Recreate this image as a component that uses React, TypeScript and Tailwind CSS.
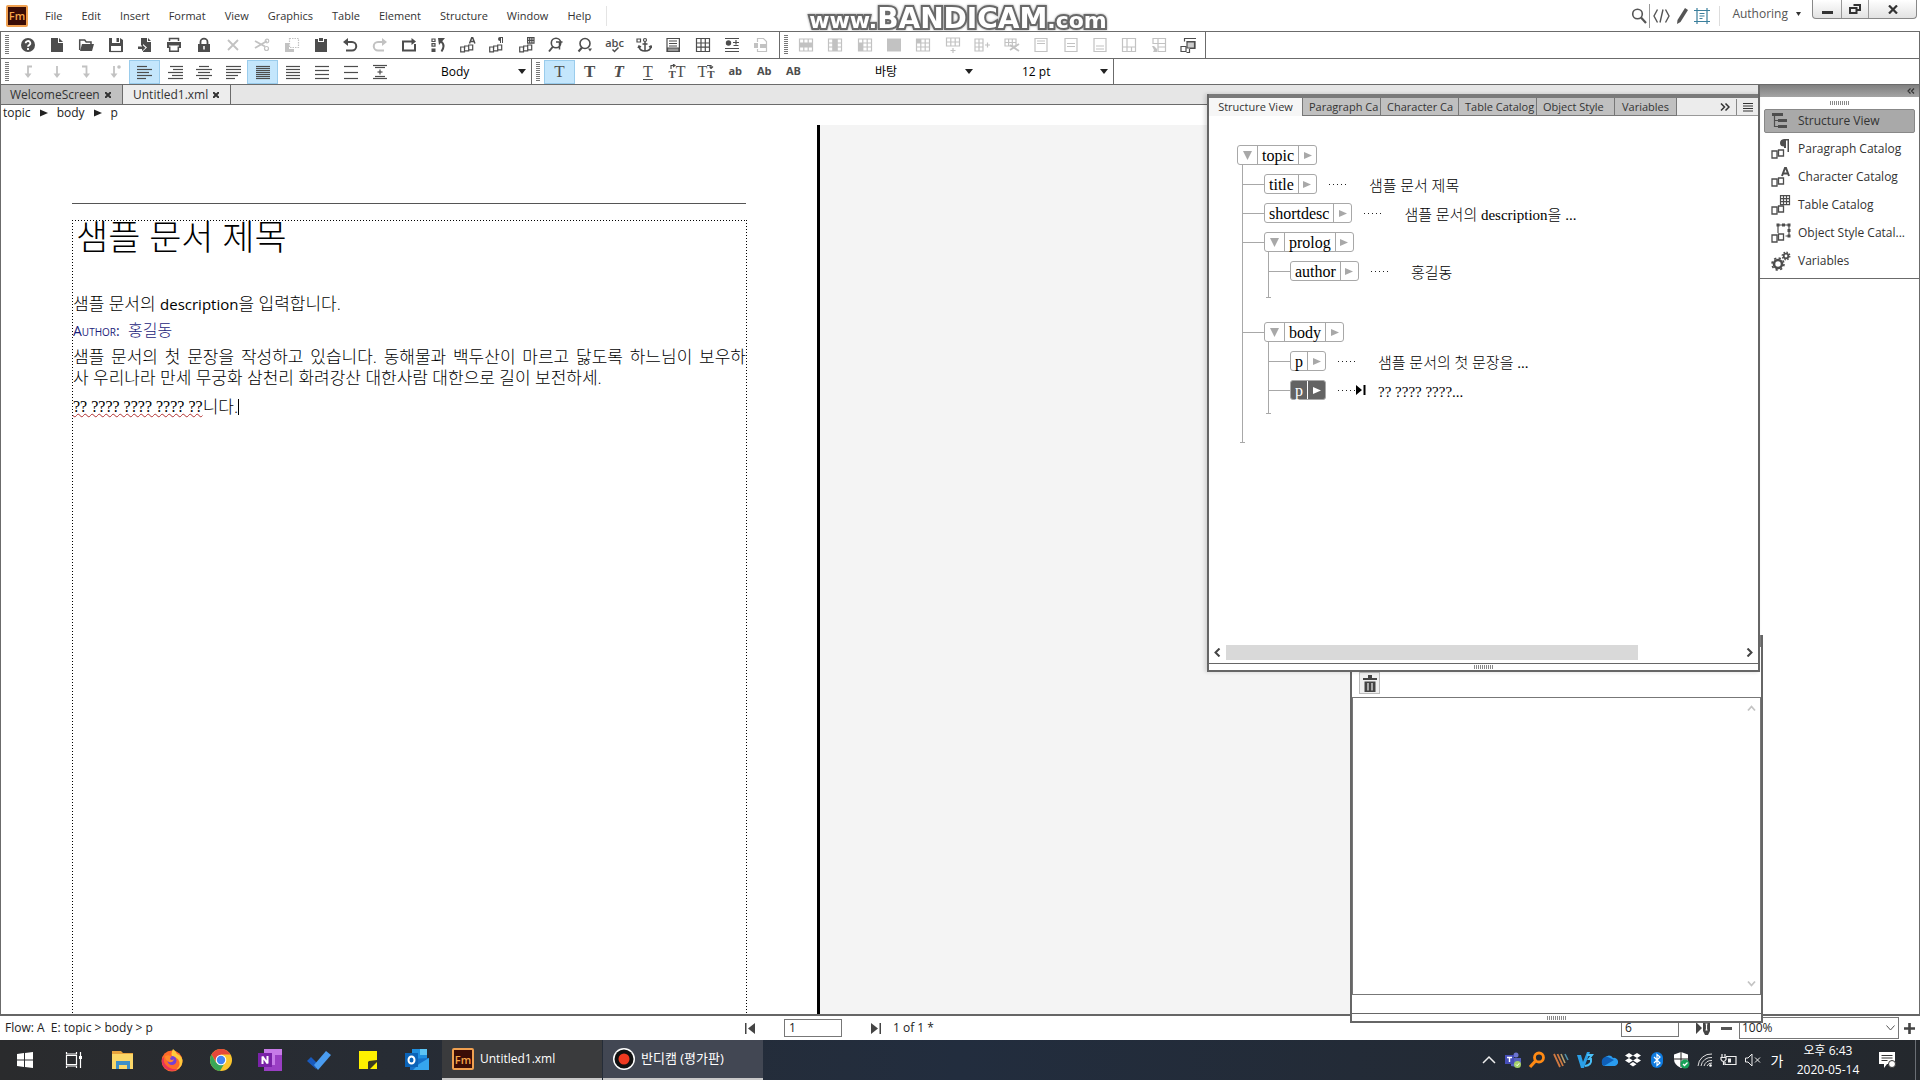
import React from "react";

type Kids = { children?: React.ReactNode };

function Ic({ children, w = 16, h = 16, vb = "0 0 16 16" }: Kids & { w?: number; h?: number; vb?: string }) {
  return (
    <svg width={w} height={h} viewBox={vb} fill="none" stroke="currentColor" strokeWidth="1.2" aria-hidden="true">
      {children}
    </svg>
  );
}

const solid = { fill: "currentColor", stroke: "none" };

function Boxes() {
  return <path d="M.7 10h3.800v4.800H.7zM4.700 11.500V9h4v4.800H4.700M8.700 10.500V8h4v4.800H8.700" />;
}

function Grip() {
  return <span className="h-[20px] w-[4px] shrink-0 bg-[repeating-linear-gradient(to_bottom,#777_0_1px,transparent_1px_2px)]" />;
}

function HGrip() {
  return <span className="h-[4px] w-[20px] bg-[repeating-linear-gradient(to_right,#888_0_1px,transparent_1px_2px)]" />;
}

type Tool = { n: string; off?: boolean; on?: boolean; i: React.ReactNode };

const fileTools: Tool[] = [
  { n: "Help", i: <Ic><circle cx="8" cy="8" r="7" {...solid} /><path stroke="#fff" strokeWidth="1.8" d="M5.700 6.300a2.300 2.200 0 1 1 3.500 1.800q-1.200.7-1.200 1.700M8 11v2" /></Ic> },
  { n: "New", i: <Ic><path {...solid} d="M2 1h7v5h5v9H2zM10 1l4 4h-4z" /></Ic> },
  { n: "Open", i: <Ic><path {...solid} d="M4 7h12l-2 7H2z" /><path strokeWidth="1.500" d="M1.700 13V3h5l1.500 2H13v2" /></Ic> },
  { n: "Save", i: <Ic><path {...solid} d="M1 1h3v5h8V1l3 2v12h-2V9H3v6H1zM8.500 1H11v4H8.500z" /><path d="M2 14.500h12" /></Ic> },
  { n: "Import", i: <Ic><path {...solid} d="M4 1h6v4h4v10H6v-1l4-3.500L6 7v1.500H4zM11 1l3 3h-3z" /><path {...solid} d="M1 9.500h4V7.500l3.500 3.200L5 14v-2H1z" /></Ic> },
  { n: "Print", i: <Ic><path d="M3.500 4V1.600h9V4" strokeWidth="1.500" /><path {...solid} d="M1 5h14v6h-2V8.500H3V11H1z" /><path d="M3.700 9.500v4.800h8.600V9.500" strokeWidth="1.500" /></Ic> },
  { n: "Lock", i: <Ic><path {...solid} d="M2 7h12v8H2z" /><path strokeWidth="1.800" d="M4.500 8V5a3.500 3.300 0 0 1 7 0v3" /><path stroke="#fff" strokeWidth="1.500" d="M8 9v3.500" /></Ic> },
  { n: "Delete", off: true, i: <Ic><path strokeWidth="1.800" d="M3 3l10 10M13 3L3 13" /></Ic> },
  { n: "Cut", off: true, i: <Ic><path strokeWidth="1.800" d="M1 4l10 5.500M1 11l12-7" /><circle cx="13" cy="4" r="1.800" /><circle cx="12.500" cy="11.500" r="2" /></Ic> },
  { n: "Copy", off: true, i: <Ic><path {...solid} d="M1 6h4v6h5v3H1z" /><path strokeDasharray="1.500 1" d="M5.500 1.500h9v9h-9z" /></Ic> },
  { n: "Paste", i: <Ic><path {...solid} d="M2 2h3v3h6V2h3v13H2zM6 1h4v3H6z" /></Ic> },
  { n: "Undo", i: <Ic><path strokeWidth="2" d="M3 5h7a3.800 3.800 0 0 1 0 8.500H4" /><path {...solid} d="M6 1v8L1 5z" /></Ic> },
  { n: "Redo", off: true, i: <Ic><path strokeWidth="2" d="M13 5H6a3.800 3.800 0 0 0 0 8.500h6" /><path {...solid} d="M10 1v8l5-4z" /></Ic> },
  { n: "Repeat", i: <Ic><path strokeWidth="2" d="M12 4.500H2v9h12V7" /><path {...solid} d="M10.500 1v7l4.500-3.500z" /></Ic> },
  { n: "History", i: <Ic><path d="M2 2h3v2.500H2zM2 6.700h3v2.500H2z" /><path {...solid} d="M1.500 11.500h4V15h-4zM8 1h7L9 8z" /><path strokeWidth="2" d="M10.500 4q5.500 4 1 10.500" /></Ic> },
  { n: "Character catalog", i: <Ic><Boxes /><path strokeWidth="1.500" d="M9.500 6.500l2.300-6h.8l2.300 6M10.500 4.500H14" /></Ic> },
  { n: "Paragraph catalog", i: <Ic><Boxes /><path {...solid} d="M14 0v6h-1V1h-1v5h-1V4Q9 4 9 2t2-2z" /></Ic> },
  { n: "Table catalog", i: <Ic><Boxes /><path d="M8.600.6H15v5.500H8.600zM8.600 3.300H15M10.700.6v5.500M12.900.6v5.500" /></Ic> },
  { n: "Find and replace", i: <Ic><circle cx="8" cy="6" r="4.700" strokeWidth="1.600" /><path strokeWidth="2" d="M5 9.500L1 14.500" /><path d="M8 5h6.500M11.500 5v7.500" strokeWidth="1.500" /></Ic> },
  { n: "Find", i: <Ic><circle cx="8" cy="6.500" r="5" strokeWidth="1.600" /><path strokeWidth="2" d="M5 10.500L1.500 14.500" /><path {...solid} d="M11 11.500h4l-2 3z" /></Ic> },
  { n: "Spelling", i: <span className="flex flex-col items-center text-[11px] leading-[9px] font-semibold">abc<Ic w={8} h={6} vb="0 0 8 6"><path strokeWidth="1.500" d="M1.500 2.500l2 2 4-4" /></Ic></span> },
  { n: "Anchored frame", i: <Ic><path d="M1 2h3.500v3H1z" /><circle cx="9" cy="3" r="1.500" /><path strokeWidth="1.500" d="M9 4.500V14M6.500 7h5M3 10q1 4 6 4t6-4M2 11l1-2 2 1M16 11l-1-2-2 1" /></Ic> },
  { n: "Footnote", i: <Ic><path d="M2 1.500h12.400v13H2zM4 4h8M4 6.500h8M4 9h8" /><path d="M2.500 11h11.400v3.500H2.500z" fill="#999" /></Ic> },
  { n: "Insert table", i: <Ic><path d="M1.500 1.500h13v13h-13zM1.500 6h13M1.500 10.200h13M6 1.500v13M10.300 1.500v13" /></Ic> },
  { n: "Conditional text", i: <Ic><circle cx="4.500" cy="6" r="2.700" {...solid} /><path d="M1 1.500h14M1 11.500h14M1 14.500h14M9 5.500h6M12 3v4.500M9.500 8.500h5" /></Ic> },
  { n: "Link", off: true, i: <Ic><path d="M4.500 5V1.500h6l3 3v10h-9V12" /><path {...solid} d="M1 6h4v5H1zM7 7h7v4H7z" /></Ic> },
];

const G = "M1.500 2h13v12h-13zM1.500 6h13M1.500 10h13M5.800 2v12M10.200 2v12";
const tableTools: Tool[] = [
  { n: "Select row", off: true, i: <Ic><path d={G} /><path {...solid} d="M1 6h14v4H1z" /></Ic> },
  { n: "Select column", off: true, i: <Ic><path d={G} /><path {...solid} d="M6 2h4v12H6z" /></Ic> },
  { n: "Select body cells", off: true, i: <Ic><path d={G} /><path {...solid} d="M1 6h5v8H1z" /></Ic> },
  { n: "Select table", off: true, i: <Ic><path {...solid} d="M1 1.500h14v13H1z" /></Ic> },
  { n: "Heading", off: true, i: <Ic><path d={G} /><path {...solid} d="M1 2h5v4H1z" /></Ic> },
  { n: "Add row", off: true, i: <Ic><path d="M1.500 1h13v8h-13zM1.500 5h13M5.800 1v8M10.200 1v8M8 11v5M5.500 13.500h5" /></Ic> },
  { n: "Add column", off: true, i: <Ic><path d="M1 2h8v12H1zM1 6h8M1 10h8M5 2v12M11 8h5M13.500 5.500v5" /></Ic> },
  { n: "Delete cells", off: true, i: <Ic><path d="M1 2h11v7H1zM1 5.500h11M4.600 2v7M8.300 2v7" /><path strokeWidth="1.800" d="M6 8l9 6M6 13l9-6" /></Ic> },
  { n: "Align cell top", off: true, i: <Ic><path d="M2 1.500h12v13H2zM4 4h8M4 6.500h8" /></Ic> },
  { n: "Align cell middle", off: true, i: <Ic><path d="M2 1.500h12v13H2zM4 6.500h8M4 9.500h8" /></Ic> },
  { n: "Align cell bottom", off: true, i: <Ic><path d="M2 1.500h12v13H2zM4 9h8M4 12h8" /></Ic> },
  { n: "Straddle", off: true, i: <Ic><path d="M1.500 1.500h13v13h-13zM1.500 10h13M6 1.500v13M10.500 10v4.500" /></Ic> },
  { n: "Unstraddle", off: true, i: <Ic><path d="M2 1.500h12.500v5H2zM7 1.500v13h7.500v-13M7 10h7.500" /><path {...solid} d="M1 9h2l3 3v3H2l1-2z" /></Ic> },
  { n: "Object style", i: <Ic><path d="M4 1.500h12M4.500 1.500v3M6.500 4.500H15v7H10" /><path d="M7 5h7.500v6H7z" fill="#ccc" /><path d="M1 9.500h5v5H1zM9.500 11.500v4h-3" fill="#fff" /></Ic> },
];

const lines = (a: [number, number, number][]) => a.map(([x, y, w], i) => <path key={i} d={`M${x} ${y}h${w}`} />);

const paraTools: Tool[] = [
  { n: "Left tab", off: true, i: <Ic><path strokeWidth="1.800" d="M12 2.500H8V11" /><path {...solid} d="M4.500 9.500h7L8 14z" /></Ic> },
  { n: "Center tab", off: true, i: <Ic><path strokeWidth="1.800" d="M8 2v9" /><path {...solid} d="M4.500 9.500h7L8 14z" /></Ic> },
  { n: "Right tab", off: true, i: <Ic><path strokeWidth="1.800" d="M4 2.500h4.500V11" /><path {...solid} d="M5 9.500h7L8.500 14z" /></Ic> },
  { n: "Decimal tab", off: true, i: <Ic><path strokeWidth="1.800" d="M7 2v9" /><path {...solid} d="M3.500 9.500h7L7 14z" /><circle cx="12" cy="3" r="1.800" {...solid} /></Ic> },
  { n: "Align left", on: true, i: <Ic>{lines([[0, 2.500, 10], [0, 5.500, 15], [0, 8.500, 12], [0, 11.500, 15], [0, 14.500, 9]])}</Ic> },
  { n: "Align right", i: <Ic>{lines([[3, 2.500, 13], [6, 5.500, 10], [1, 8.500, 15], [5, 11.500, 11], [1, 14.500, 15]])}</Ic> },
  { n: "Align center", i: <Ic>{lines([[3, 2.500, 10], [0, 5.500, 16], [2, 8.500, 12], [0, 11.500, 16], [3, 14.500, 10]])}</Ic> },
  { n: "Justify", i: <Ic>{lines([[1, 2.500, 15], [1, 5.500, 15], [1, 8.500, 15], [1, 11.500, 12], [1, 14.500, 9]])}</Ic> },
  { n: "Single spacing", on: true, i: <Ic>{lines([[1, 2.500, 14], [1, 4.500, 14], [1, 6.500, 14], [1, 8.500, 14], [1, 10.500, 14], [1, 12.500, 14], [1, 14.500, 14]])}</Ic> },
  { n: "One and a half spacing", i: <Ic>{lines([[1, 2.500, 14], [1, 5.500, 14], [1, 8.500, 14], [1, 11.500, 14], [1, 14.500, 14]])}</Ic> },
  { n: "Double spacing", i: <Ic>{lines([[1, 2.500, 14], [1, 6.500, 14], [1, 10.500, 14], [1, 14.500, 14]])}</Ic> },
  { n: "Custom spacing", i: <Ic>{lines([[1, 2.500, 14], [1, 8.500, 14], [1, 14.500, 14]])}</Ic> },
  { n: "Space between paragraphs", i: <Ic>{lines([[1, 1.500, 14], [3, 3.500, 10], [5.500, 8, 5], [3, 12.500, 10], [1, 14.500, 14]])}<path d="M8 5.500v5" /></Ic> },
];

const S = "font-['Liberation_Serif',serif]";

function SmallT({ flip }: { flip?: boolean }) {
  return (
    <span className="flex flex-col items-center text-[11px] leading-[10px] font-bold">
      <Ic w={7} h={5} vb="0 0 7 5">
        {flip ? <path d="M0 1.500h4v3M2.500 2.500L4 4.500l2-2" /> : <path d="M2 5V1.500h4M4 0l2 1.500L4 3" />}
      </Ic>
      T
    </span>
  );
}

const textTools: Tool[] = [
  { n: "Plain", on: true, i: <span className={`${S} text-[17px]`}>T</span> },
  { n: "Bold", i: <span className={`${S} text-[17px] font-bold`}>T</span> },
  { n: "Italic", i: <span className={`${S} text-[17px] font-bold italic`}>T</span> },
  { n: "Underline", i: <span className={`${S} text-[16px] underline underline-offset-2`}>T</span> },
  { n: "Superscript", i: <span className={`${S} flex items-center text-[16px] leading-5`}><SmallT />T</span> },
  { n: "Subscript", i: <span className={`${S} flex items-center text-[16px] leading-5`}>T<SmallT flip /></span> },
  { n: "Lowercase", i: <span className="text-[11px] font-bold">ab</span> },
  { n: "Initial caps", i: <span className="text-[11px] font-bold">Ab</span> },
  { n: "Uppercase", i: <span className="text-[11px] font-bold">AB</span> },
];

function Tools({ items, className }: { items: Tool[]; className: string }) {
  return (
    <div className={`flex shrink-0 items-center ${className}`}>
      {items.map((t) => (
        <button
          key={t.n}
          aria-label={t.n}
          className={`flex h-6 flex-1 items-center justify-center ${t.on ? "border border-[#9accec] bg-[#c4e6fc]" : ""} ${t.off ? "text-[#c2c2c2]" : "text-[#4d4d4d]"}`}
        >
          {t.i}
        </button>
      ))}
    </div>
  );
}

function Pick({ label, value, className }: { label: string; value: string; className: string }) {
  return (
    <label className={`relative flex shrink-0 items-center self-stretch ${className}`}>
      <select aria-label={label} className="w-full appearance-none bg-transparent text-xs text-black outline-none">
        <option>{value}</option>
      </select>
      <svg className="pointer-events-none absolute right-[5px]" width="8" height="5" viewBox="0 0 8 5" aria-hidden="true">
        <path d="M0 0h8L4 5z" fill="#222" />
      </svg>
    </label>
  );
}

function FmLogo() {
  return (
    <span className="flex size-[22px] shrink-0 items-center justify-center rounded-[2px] border-2 border-[#f0a050] bg-[#3a0c06] text-[11px] leading-none font-semibold text-[#f7a64a]">
      Fm
    </span>
  );
}

function MenuBar() {
  const menus = ["File", "Edit", "Insert", "Format", "View", "Graphics", "Table", "Element", "Structure", "Window", "Help"];
  return (
    <header className="relative flex h-[31px] shrink-0 items-center pl-1.5 text-[11px] text-[#333]">
      <FmLogo />
      <nav className="ml-2 flex items-center gap-px">
        {menus.map((m) => (
          <button key={m} className="px-[9px] leading-5">{m}</button>
        ))}
      </nav>
      <span className="ml-1.5 h-5 w-px bg-[#e4e4e4]" />
      <div className="pointer-events-none absolute inset-x-0 top-[5px] flex items-baseline justify-center pr-1 font-['DejaVu_Sans',sans-serif] leading-7 font-bold text-white drop-shadow-[0_0_1px_#999] [-webkit-text-stroke:4px_#686868] [paint-order:stroke_fill]">
        <span className="text-[22px]">www.</span>
        <span className="text-[28px]">BANDICAM</span>
        <span className="text-[22px]">.com</span>
      </div>
      <div className="relative ml-auto flex items-center self-stretch text-[#555]">
        <button aria-label="Search" className="flex h-6 w-5 items-center justify-center">
          <Ic><circle cx="6.500" cy="6" r="4.800" strokeWidth="1.600" /><path strokeWidth="2.200" d="M10 9.500l5 5.500" /></Ic>
        </button>
        <span className="h-6 w-px bg-[#999]" />
        <button aria-label="XML view" className="flex h-6 w-[22px] items-center justify-center">
          <Ic w={17} vb="0 0 17 16"><path strokeWidth="1.400" d="M4.500 1.500L1 8l3.500 6.500M12.500 1.500L16 8l-3.500 6.500M10 1.500L7 14.500" /></Ic>
        </button>
        <button aria-label="Author view" className="flex h-6 w-[20px] items-center justify-center">
          <Ic w={12} vb="0 0 12 16"><path {...solid} d="M9 0l3 2-7.500 12L1 16l.5-4z" /></Ic>
        </button>
        <button aria-label="WYSIWYG view" className="flex h-6 w-[20px] items-center justify-center text-[#3b7f9c]">
          <Ic><path d="M3 0v16M13 0v16M0 2.500h16M0 13.500h16M5.500 5.500h5M5.500 8h5M5.500 10.500h3" /></Ic>
        </button>
        <span className="mx-[7px] h-5 w-px bg-[#ddd]" />
        <button className="flex items-center gap-2 px-[5px] pb-1 text-[12px] leading-[26px]">
          Authoring
          <svg width="5" height="4" viewBox="0 0 5 4" aria-hidden="true"><path d="M0 0h5L2.500 4z" fill="#333" /></svg>
        </button>
        <div className="mr-[3px] ml-1.5 flex h-[19px] self-start rounded-b-sm border border-t-0 border-[#888] bg-gradient-to-b from-white to-[#e2e2e2] text-[#333]">
          <button aria-label="Minimize" className="flex w-7 items-end justify-center pb-1"><span className="h-[3px] w-[11px] bg-[#333]" /></button>
          <button aria-label="Restore" className="flex w-7 items-center justify-center border-x border-[#999]">
            <Ic w={12} h={10} vb="0 0 12 10"><path strokeWidth="2" d="M4.500 1h6.500v5H8.500M1 4h6.500v5H1z" /></Ic>
          </button>
          <button aria-label="Close" className="flex w-[47px] items-center justify-center">
            <Ic w={10} h={9} vb="0 0 10 9"><path strokeWidth="2.200" d="M1 .5l8 8M9 .5l-8 8" /></Ic>
          </button>
        </div>
      </div>
    </header>
  );
}

function CloseX() {
  return <Ic w={6} h={6} vb="0 0 6 6"><path strokeWidth="2" d="M0 0l6 6M6 0L0 6" /></Ic>;
}

function DocTabs() {
  return (
    <div className="flex h-[21px] shrink-0 border-y border-[#6b6b6b] bg-[#e6e6e6] text-[12px] leading-[18px] text-[#333]">
      <div className="flex w-[122px] items-center justify-between border-r border-[#6b6b6b] bg-[#c0c0c0] pr-[11px] pl-[9px]">
        WelcomeScreen
        <button aria-label="Close WelcomeScreen"><CloseX /></button>
      </div>
      <div className="flex w-[108px] items-center justify-between border-r border-[#6b6b6b] bg-[#ededed] pr-[11px] pl-2.5">
        Untitled1.xml
        <button aria-label="Close Untitled1.xml"><CloseX /></button>
      </div>
    </div>
  );
}

function Tri() {
  return <svg width="8" height="8" viewBox="0 0 8 8" aria-hidden="true"><path d="M0 .5v7L8 4z" fill="#222" /></svg>;
}

const DOT_FRAME =
  "bg-no-repeat bg-[image:repeating-linear-gradient(to_right,#000_0_1px,transparent_1px_3px),repeating-linear-gradient(to_bottom,#000_0_1px,transparent_1px_3px),repeating-linear-gradient(to_bottom,#000_0_1px,transparent_1px_3px)] [background-size:100%_1px,1px_100%,1px_100%] [background-position:left_top,left_top,right_top]";

function Document() {
  return (
    <div className="flex min-h-0 flex-1 bg-[#f4f4f4]">
      <article className="flex w-[819px] flex-col border-r-[3px] border-black bg-white pt-[78px] pr-[70px] pl-[71px] text-black">
        <hr className="mr-px border-t border-[#555]" />
        <div className={`mt-4 flex-1 p-px text-[17px] leading-[21px] font-light ${DOT_FRAME}`}>
          <h1 className="mt-0.5 pl-[3px] font-['Liberation_Serif','Noto_Sans_CJK_KR',serif] text-[35px] leading-8 font-light">샘플 문서 제목</h1>
          <p className="mt-[38px]">샘플 문서의 <span className="text-[15px] font-normal">description</span>을 입력합니다.</p>
          <p className="mt-[5px] text-[16px] text-[#1c1c7a]"><span className="text-[14px] font-normal [font-variant:small-caps]">Author:</span>&nbsp; 홍길동</p>
          <p className="mt-[5px] [text-align-last:justify]">샘플 문서의 첫 문장을 작성하고 있습니다. 동해물과 백두산이 마르고 닳도록 하느님이 보우하</p>
          <p>사 우리나라 만세 무궁화 삼천리 화려강산 대한사람 대한으로 길이 보전하세.</p>
          <p className="mt-2 flex items-center">
            <span className="font-['Liberation_Serif',serif] text-[16px] font-normal underline decoration-[#b03030] decoration-wavy decoration-1 underline-offset-1">?? ???? ???? ???? ??</span>
            니다.<span className="h-4 w-px bg-black" />
          </p>
        </div>
      </article>
    </div>
  );
}

function Dock() {
  const cat = (d: React.ReactNode) => <Ic w={20} h={20} vb="0 0 20 20"><path strokeWidth="1.300" d="M1 12h5v7H1zM7.500 13.500V11h5v6h-5v-3.500" />{d}</Ic>;
  const items: [string, React.ReactNode][] = [
    ["Structure View", <Ic w={18} h={16} vb="0 0 18 16"><path {...solid} d="M1 0h11v3H1zM7 6h9v3H7zM7 12h9v3H7z" /><path d="M3.500 2v11.500H8M3.500 7.500H8" /></Ic>],
    ["Paragraph Catalog", cat(<path {...solid} d="M18 0v13h-1.500V1.500H15V9h-2V7.500Q9 7.500 9 4t4-4z" />)],
    ["Character Catalog", cat(<path strokeWidth="2" d="M11 9l3-8h1l3 8M12 6.500h5" />)],
    ["Table Catalog", cat(<path d="M9.500.7h9v9h-9zM9.500 3.700h9M9.500 6.700h9M12.500.7v9M15.500.7v9" />)],
    ["Object Style Catal...", cat(<><path d="M7 10V2h11v11h-3.500" /><path {...solid} d="M5.500.5h3v3h-3zM11 .5h3v3h-3zM16.500.5h3v3h-3zM16.500 6h3v3h-3zM16.500 11.500h3v3h-3z" /></>)],
    ["Variables", <Ic w={20} h={20} vb="0 0 20 20"><circle cx="7" cy="13" r="4" strokeWidth="2.600" /><circle cx="7" cy="13" r="6" strokeWidth="1.600" strokeDasharray="2.300 2.400" /><circle cx="15" cy="5" r="2.300" strokeWidth="1.800" /><circle cx="15" cy="5" r="3.800" strokeWidth="1.300" strokeDasharray="1.500 1.480" /></Ic>],
  ];
  return (
    <aside className="flex w-[161px] shrink-0 flex-col border-t border-l-2 border-[#6b6b6b] bg-white">
      <div className="flex h-3 items-center justify-end bg-gradient-to-b from-[#808080] to-[#a4a4a4] pr-1 text-[#333]">
        <Ic w={8} h={6} vb="0 0 8 6"><path d="M3.500.5L1 3l2.500 2.500M7 .5L4.500 3 7 5.500" /></Ic>
      </div>
      <div className="flex h-3 items-center justify-center"><HGrip /></div>
      <div className="flex flex-col border-b border-[#6b6b6b] px-1 pb-px">
        {items.map(([n, ic], i) => (
          <button
            key={n}
            className={`mb-1 flex h-6 items-center rounded-[2px] border pl-1.5 text-[12px] text-[#333] ${i === 0 ? "border-[#888] bg-[#a9a9a9]" : "border-transparent"}`}
          >
            <span className="flex w-[27px] text-[#4d4d4d]">{ic}</span>
            {n}
          </button>
        ))}
      </div>
    </aside>
  );
}

function Tag({ name, open, sel }: { name: string; open?: boolean; sel?: boolean }) {
  const line = sel ? "border-white" : "border-[#a8a8a8]";
  return (
    <button className={`flex h-5 items-stretch rounded-[3px] border border-[#a8a8a8] ${sel ? "bg-[#636363] text-white" : "bg-white text-black"}`}>
      {open && (
        <span className={`flex w-5 items-center justify-center border-r ${line}`}>
          <svg width="9" height="9" viewBox="0 0 9 9" aria-hidden="true"><path d="M0 0h9L4.500 9z" fill="#a8a8a8" /></svg>
        </span>
      )}
      <span className={`border-r px-1 text-[16px] leading-5 ${line}`}>{name}</span>
      <span className="flex w-[17px] items-center justify-center">
        <svg width="8" height="7" viewBox="0 0 8 7" aria-hidden="true"><path d="M0 0v7l8-3.500z" fill={sel ? "#fff" : "#a8a8a8"} /></svg>
      </span>
    </button>
  );
}

function Row({ text, caret, ...tag }: { name: string; open?: boolean; sel?: boolean; text?: string; caret?: boolean }) {
  return (
    <div className="mb-[9px] flex h-5 items-center">
      <span className="h-px w-[21px] bg-[#a8a8a8]" />
      <Tag {...tag} />
      {text && (
        <>
          <span className="ml-3 h-px w-[18px] bg-[repeating-linear-gradient(to_right,#222_0_1px,transparent_1px_4px)]" />
          <span className="flex w-[22px]">
            {caret && <svg width="10" height="10" viewBox="0 0 10 10" aria-hidden="true"><path d="M0 0v10l6-5zM7.500 0H9.500v10H7.500z" fill="#000" /></svg>}
          </span>
          <span className="pt-1 text-[15px] leading-5 font-light text-black">{text}</span>
        </>
      )}
    </div>
  );
}

function Branch({ children, className }: Kids & { className: string }) {
  return (
    <div className={className}>
      <div className="border-l border-[#a8a8a8]">{children}</div>
      <div className="-ml-0.5 h-px w-[5px] bg-[#a8a8a8]" />
    </div>
  );
}

function StructurePanel() {
  const tabs = [
    ["Paragraph Catalog", "Paragraph Ca"],
    ["Character Catalog", "Character Ca"],
    ["Table Catalog", "Table Catalog"],
    ["Object Style", "Object Style"],
  ];
  return (
    <section className="absolute top-[94px] right-[160px] flex h-[578px] w-[553px] flex-col border-x-2 border-b-2 border-[#666] bg-white shadow-[-2px_0_4px_rgba(0,0,0,0.15)]">
      <div className="h-1 shrink-0 bg-[#7a7a7a]" />
      <div role="tablist" className="flex h-[18px] shrink-0 bg-[#ececec] text-[11px] leading-[18px] text-[#333]">
        <button role="tab" aria-selected="true" className="w-[93px] bg-[#f6f6f6] text-center whitespace-nowrap">Structure View</button>
        {tabs.map(([full, shown]) => (
          <button key={full} role="tab" aria-label={full} className="w-[78px] border-b border-l border-[#777] bg-[#c0c0c0] pl-1.5 text-left whitespace-nowrap">{shown}</button>
        ))}
        <button role="tab" className="w-[63px] border-x border-b border-[#777] bg-[#c0c0c0] text-center">Variables</button>
        <div className="flex flex-1 items-center justify-end gap-1.5 border-b border-[#999] pr-[5px] text-[#333]">
          <Ic w={10} h={8} vb="0 0 10 8"><path strokeWidth="1.500" d="M1 0.500L4.500 4 1 7.500M5.500.5L9 4 5.500 7.500" /></Ic>
          <span className="h-4 w-px self-center bg-[#888]" />
          <button aria-label="Panel menu"><Ic w={10} h={10} vb="0 0 10 10"><path d="M0 1.500h10M0 4h10M0 6.500h10M0 9h10" /></Ic></button>
        </div>
      </div>
      <div className="flex-1 pt-[29px] pl-7 font-['Liberation_Serif','Noto_Sans_CJK_KR',serif]">
        <div className="flex"><Tag name="topic" open /></div>
        <Branch className="ml-[5px]">
          <div className="pt-[9px] pb-7">
            <Row name="title" text="샘플 문서 제목" />
            <Row name="shortdesc" text="샘플 문서의 description을 ..." />
            <Row name="prolog" open />
            <Branch className="-mt-[9px] mb-6 ml-[25px]">
              <div className="pt-[9px] pb-[7px]"><Row name="author" text="홍길동" /></div>
            </Branch>
            <Row name="body" open />
            <Branch className="-mt-[9px] ml-[25px]">
              <div className="pt-[9px] pb-1">
                <Row name="p" text="샘플 문서의 첫 문장을 ..." />
                <Row name="p" sel caret text="?? ???? ????..." />
              </div>
            </Branch>
          </div>
        </Branch>
      </div>
      <div className="flex h-[22px] shrink-0 items-center px-[5px] text-[#444]">
        <button aria-label="Scroll left"><Ic w={8} h={9} vb="0 0 8 9"><path strokeWidth="2" d="M5.500.5l-4 4 4 4" /></Ic></button>
        <div className="mx-1 h-[15px] flex-1"><div className="h-full w-[80%] bg-[#d9d9d9]" /></div>
        <button aria-label="Scroll right"><Ic w={8} h={9} vb="0 0 8 9"><path strokeWidth="2" d="M2.500.5l4 4-4 4" /></Ic></button>
      </div>
      <div className="flex h-[7px] shrink-0 items-center justify-center border-t border-[#666]"><HGrip /></div>
    </section>
  );
}

function AttributePanel() {
  return (
    <section className="absolute top-[635px] right-[157px] flex h-[388px] w-[413px] flex-col border-x-2 border-b-2 border-[#666] bg-white">
      <div className="h-3 shrink-0 bg-[#808080]" />
      <div className="flex h-[50px] shrink-0 items-end pb-[3px] pl-[7px]">
        <button aria-label="Delete" className="flex h-[22px] w-[21px] items-center justify-center border border-[#bbb] bg-[#f0f0f0] text-[#444]">
          <Ic w={14} h={17} vb="0 0 14 17"><path {...solid} d="M0 3h14v2H0zM5 0h4v3H5z" /><path {...solid} d="M1.500 6.500h11V17h-11z" /><path stroke="#eee" d="M5 8v7.500M9 8v7.500" /></Ic>
        </button>
      </div>
      <div className="flex flex-1 flex-col items-end justify-between border border-[#777] px-1 py-[7px] text-[#c4c4c4]">
        <Ic w={9} h={7} vb="0 0 9 7"><path strokeWidth="1.800" d="M1 5.500l3.500-4 3.500 4" /></Ic>
        <Ic w={9} h={7} vb="0 0 9 7"><path strokeWidth="1.800" d="M1 1.500l3.500 4 3.500-4" /></Ic>
      </div>
      <div className="h-[18px] shrink-0" />
      <div className="flex h-2 shrink-0 items-center justify-center border-t border-[#666]"><HGrip /></div>
    </section>
  );
}

function StatusBar() {
  return (
    <footer className="flex h-[26px] shrink-0 items-center border-t-2 border-[#666] bg-white text-[12px] text-[#222]">
      <span className="w-[745px] pl-[5px] whitespace-pre">Flow: A  E: topic &gt; body &gt; p</span>
      <button aria-label="First page" className="flex w-[39px] text-[#444]"><Ic w={11} h={11} vb="0 0 11 11"><path {...solid} d="M0 0h1.500v11H0zM10 0v11L3 5.500z" /></Ic></button>
      <input aria-label="Page" defaultValue="1" className="h-[18px] w-[58px] border border-[#777] px-1" />
      <button aria-label="Last page" className="ml-7 flex w-[23px] text-[#444]"><Ic w={11} h={11} vb="0 0 11 11"><path {...solid} d="M9.500 0H11v11H9.500zM1 0v11l7-5.500z" /></Ic></button>
      <span>1 of 1 *</span>
      <div className="ml-auto flex items-center">
        <input aria-label="Line" defaultValue="6" className="h-[18px] w-[58px] border border-[#777] px-[3px]" />
        <button aria-label="Go to line" className="ml-[17px] flex w-[25px] text-[#444]"><Ic w={14} h={13} vb="0 0 14 13"><path {...solid} d="M0 0v12l6-6zM7 0h7v9l-2 4H9L7 9z" /><path stroke="#fff" d="M10.500 2v6M9.500 2h2M9.500 8h2" /></Ic></button>
        <button aria-label="Zoom out" className="w-[18px]"><span className="block h-[3px] w-[11px] bg-[#555]" /></button>
        <label className="relative flex items-center">
          <select aria-label="Zoom" className="h-[22px] w-[160px] appearance-none border border-[#777] bg-white pl-0.5 text-[12px]"><option>100%</option></select>
          <svg className="pointer-events-none absolute right-1" width="9" height="6" viewBox="0 0 9 6" fill="none" stroke="#555" aria-hidden="true"><path d="M.5.5l4 4.500 4-4.500" /></svg>
        </label>
        <button aria-label="Zoom in" className="mx-[5px] flex text-[#444]"><Ic w={11} h={11} vb="0 0 11 11"><path strokeWidth="2.600" d="M5.500 0v11M0 5.500h11" /></Ic></button>
      </div>
    </footer>
  );
}

function V({ children }: Kids) {
  return <svg width="24" height="24" viewBox="0 0 24 24" fill="none" aria-hidden="true">{children}</svg>;
}

function T({ children }: Kids) {
  return <svg width="18" height="18" viewBox="0 0 18 18" fill="none" aria-hidden="true">{children}</svg>;
}

function Taskbar() {
  const apps: [string, React.ReactNode][] = [
    ["Start", <V><path fill="#fff" d="M4 6l7-1v6.500H4zM12 4.900L20 4v7.500h-8zM4 12.500h7V19l-7-1zM12 12.500h8V20l-8-1z" /></V>],
    ["Task view", <V><path stroke="#fff" strokeWidth="1.200" d="M4.500 7.500h10v9h-10zM4.500 4v2h10V4M4.500 20v-2h10v2M18.500 4v16" /><path fill="#fff" d="M17 8h3v3h-3z" /></V>],
    ["File Explorer", <V><path fill="#e8a33d" d="M1 3h9l2 2h10v4H1z" /><path fill="#fbd768" d="M1 6h21v15H1z" /><path fill="#3d8fc8" d="M5 13h14v8h-3v-4H8v4H5z" /></V>],
    ["Firefox", <V><circle cx="12" cy="13" r="10.500" fill="#ff6a2a" /><path fill="#ffc93c" d="M13 1q3 2 4 5 4 1 5.500 6Q23 19 16 22q6-5 2-11-3-2-5-1-3-4 0-9z" /><path fill="#e8345a" d="M2 11q-1 8 6 11 6 2 10-1-8 1-12-4-3-3-2-8z" /><circle cx="12" cy="12.500" r="4.500" fill="#7540d8" /><path fill="#ff8a2a" d="M5 8q4-2 7 1-2 0-2 2 2 2 4 0-1 4-5 3-4-2-4-6z" /></V>],
    ["Chrome", <V><circle cx="12" cy="12" r="11" fill="#fbc62e" /><path fill="#e5483a" d="M2.500 6.500A11 11 0 0 1 21.500 6.500H12L7 14z" /><path fill="#3aa757" d="M2.500 6.500A11 11 0 0 0 11 23l5-8.500-4 2-5-2z" /><circle cx="12" cy="12" r="5.300" fill="#fff" /><circle cx="12" cy="12" r="4.200" fill="#4285f4" /></V>],
    ["OneNote", <V><path fill="#c77be8" d="M6 1h18v22H6z" /><path fill="#9a3fc4" d="M17 7h7v16H6v-6h11z" /><path fill="#7a22a8" d="M0 5h14v14H0z" /><path stroke="#fff" strokeWidth="2" strokeLinejoin="bevel" d="M4.500 16V8.500l5 7V8" /></V>],
    ["To Do", <V><path fill="#195abd" d="M0 13l4-4 8 8-3 4z" /><path fill="#4a9cf0" d="M7 17L19 3l5 4L11 22z" /></V>],
    ["Sticky Notes", <V><path fill="#fff100" d="M3 3h18v18H3z" /><path fill="#3a3a20" d="M21 12v2l-7 7h-2v-7l1-1z" /></V>],
    ["Outlook", <V><path fill="#1f8fe0" d="M7 1h15v12H7z" /><path fill="#5cc4f5" d="M15 1h7v6h-7z" /><path fill="#1470c8" d="M5 11l19-1v12H5z" /><path fill="#35a5ee" d="M14 16l10-6v12H8z" /><path fill="#0a63b8" d="M0 5h13v14H0z" /><ellipse cx="6.500" cy="12" rx="3" ry="3.500" stroke="#fff" strokeWidth="2" /></V>],
  ];
  const tray: [string, React.ReactNode][] = [
    ["Show hidden icons", <T><path stroke="#eee" strokeWidth="1.500" d="M3 12l6-6 6 6" /></T>],
    ["Teams", <T><circle cx="12" cy="4" r="2.500" fill="#6b74d0" /><path fill="#5560bd" d="M7 7h10v5l-4 4-6-1z" /><path fill="#464eb8" d="M1 4h9v9H1z" /><path stroke="#fff" strokeWidth="1.400" d="M3 6.500h5M5.500 6.500V11" /><circle cx="13.500" cy="13.500" r="3.500" fill="#a5d06a" /><path stroke="#fff" d="M12 13.500l1.200 1.200 2-2.400" /></T>],
    ["Everything", <T><circle cx="11" cy="6.500" r="4.500" stroke="#ff8a14" strokeWidth="2.800" /><path stroke="#ff8a14" strokeWidth="3.200" d="M7.500 10L2 16" /></T>],
    ["Stripes", <T><path stroke="#d07840" strokeWidth="1.800" d="M2 3l6 13M5.500 3l5.500 12" /><path stroke="#b8a070" strokeWidth="1.600" d="M9 3l4 9" /><path stroke="#4f8fa8" strokeWidth="1.600" d="M13 3l3 6" /></T>],
    ["V3", <T><path fill="#2aa0e8" d="M1 4h4l2 7 4-10h3L8 17H5z" /><path stroke="#4ac0f8" strokeWidth="2" d="M11 4h5l-3 4h2q1 6-6 7" /></T>],
    ["OneDrive", <T><path fill="#2a9cf0" d="M4 15a4 4 0 0 1 0-7 5 5 0 0 1 9-1 4 4 0 0 1 2 8z" /><path fill="#0f5fb8" d="M2 9q2-4 6-3l6 3-10 6q-3-1-2-6z" /></T>],
    ["Dropbox", <T><path fill="#fff" d="M5 2l4 2.500L5 7 1 4.500zM13 2l4 2.500L13 7 9 4.500zM5 7l4 2.500L5 12 1 9.500zM13 7l4 2.500-4 2.500-4-2.500zM9 11l3.500 2.200L9 15.500l-3.500-2.300z" /></T>],
    ["Bluetooth", <T><rect x="3" y="1" width="12" height="16" rx="6" fill="#0f7be0" /><path stroke="#fff" strokeWidth="1.200" d="M6 6l6 6-3 2.500v-11L12 6l-6 6" /></T>],
    ["Security", <T><path fill="#fff" d="M9 1l7 2.500V8q0 6-7 9-7-3-7-9V3.500z" /><path stroke="#222" d="M9 1v15M2 8h14" /><circle cx="13" cy="13" r="4.500" fill="#18a058" /><path stroke="#fff" strokeWidth="1.300" d="M11 13l1.500 1.500 3-3" /></T>],
    ["Network", <T><path stroke="#ddd" d="M2 15A13 13 0 0 1 16 3M5 15A10 10 0 0 1 16 6.500M8 15a8 8 0 0 1 8-5.500M11 15a5 5 0 0 1 5-3" /><circle cx="14.500" cy="14.500" r="1.300" fill="#fff" /></T>],
    ["Battery", <T><path stroke="#eee" strokeWidth="1.200" d="M6 5.500h10v8H5V11M2 3v3M5 3v3M1 6.500h5v2q-1 2-2.500 2T1 8.500zM3.500 10v4" /><path fill="#eee" d="M8 7.500h3v4H8z" /></T>],
    ["Volume", <T><path stroke="#eee" d="M1.500 7h2.500l4-4v12l-4-4H1.500zM11 6.500l5 5M16 6.500l-5 5" /></T>],
  ];
  return (
    <footer className="flex h-10 shrink-0 items-stretch bg-gradient-to-r from-[#2a2b2d] via-[#222d3e] to-[#24282d] text-[12px] text-white">
      <div className="flex w-[442px] shrink-0">
        {apps.map(([n, ic]) => <button key={n} aria-label={n} className="flex flex-1 items-center justify-center">{ic}</button>)}
      </div>
      <button className="flex w-[160px] items-center gap-1.5 border-b-2 border-[#c9c9c9] bg-[#3a3b3d] pl-[10px]">
        <FmLogo />Untitled1.xml
      </button>
      <button className="ml-px flex w-[160px] items-center gap-[5px] border-b-2 border-[#c9c9c9] bg-[#424753] pl-[9px] text-[13px]">
        <V><circle cx="12" cy="12" r="11" fill="#fff" /><circle cx="12" cy="12" r="9.500" fill="#111" /><circle cx="12" cy="12" r="5.500" fill="#f03a20" /></V>
        반디캠 (평가판)
      </button>
      <div className="ml-auto flex items-center">
        {tray.map(([n, ic]) => <button key={n} aria-label={n} className="flex w-6 items-center justify-center">{ic}</button>)}
        <button className="w-6 text-[14px]">가</button>
        <button className="w-[78px] text-center leading-[19px]">오후 6:43<br />2020-05-14</button>
        <button aria-label="Notifications" className="mr-2 flex w-10 justify-center">
          <T><path fill="#fff" d="M1 1h16v12H9l-3 4v-4H1z" /><path stroke="#333" d="M3.500 4.500h11M3.500 7h11M3.500 9.500h6" /><circle cx="14" cy="13" r="3.500" fill="#fff" stroke="#333" /></T>
        </button>
        <span className="mr-1 h-10 w-px bg-[#6a6e74]" />
      </div>
    </footer>
  );
}

export default function App() {
  return (
    <div className="relative flex h-screen flex-col overflow-hidden bg-white font-['Open_Sans','Noto_Sans_CJK_KR',sans-serif] text-[12px] text-[#4d4d4d]">
      <MenuBar />
      <div className="flex min-h-0 flex-1 flex-col border-x border-[#6b6b6b]">
        <div className="flex h-[27px] shrink-0 items-center border-t border-[#6b6b6b] pl-1">
          <Grip />
          <Tools items={fileTools} className="ml-1 w-[763px]" />
          <span className="ml-[3px] w-px self-stretch bg-[#6b6b6b]" />
          <span className="flex w-[11px] justify-center"><Grip /></span>
          <Tools items={tableTools} className="w-[412px]" />
          <span className="ml-[2px] w-px self-stretch bg-[#6b6b6b]" />
        </div>
        <div className="flex h-[26px] shrink-0 items-center border-t border-[#6b6b6b] pl-1">
          <Grip />
          <Tools items={paraTools} className="ml-1 w-[381px]" />
          <Pick label="Paragraph format" value="Body" className="w-[137px] pl-[47px]" />
          <span className="w-px self-stretch bg-[#6b6b6b]" />
          <span className="flex w-[12px] justify-center"><Grip /></span>
          <Tools items={textTools} className="w-[264px]" />
          <Pick label="Font" value="바탕" className="w-[170px] pl-[67px]" />
          <Pick label="Font size" value="12 pt" className="w-[135px] pl-[44px]" />
          <span className="w-px self-stretch bg-[#6b6b6b]" />
        </div>
        <div className="flex min-h-0 flex-1">
          <main className="flex min-w-0 flex-1 flex-col">
            <DocTabs />
            <nav aria-label="Element path" className="flex h-5 shrink-0 items-center gap-[9px] pb-1 pl-0.5 text-[12px] text-[#222]">
              <span>topic</span><Tri /><span>body</span><Tri /><span>p</span>
            </nav>
            <Document />
          </main>
          <Dock />
        </div>
      </div>
      <StatusBar />
      <Taskbar />
      <AttributePanel />
      <StructurePanel />
    </div>
  );
}
